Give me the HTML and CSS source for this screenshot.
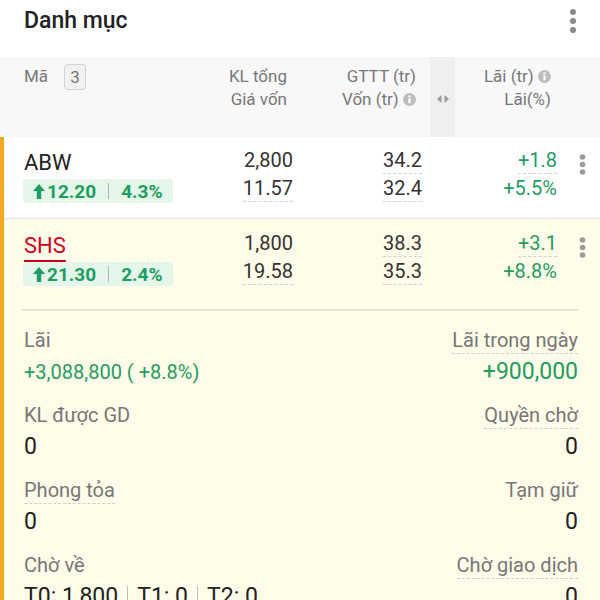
FILE: index.html
```html
<!DOCTYPE html>
<html lang="vi">
<head>
    <meta charset="UTF-8">
    <meta name="viewport" content="width=device-width, initial-scale=1.0">
    <title>Danh mục</title>
    <link rel="stylesheet" href="styles.css">
</head>
<body>
    <header class="top">
        <h1>Danh mục</h1>
        <svg class="kebab" width="8" height="24" viewBox="0 0 8 24"><circle cx="4" cy="3" r="3"/><circle cx="4" cy="12" r="3"/><circle cx="4" cy="21" r="3"/></svg>
    </header>

    <div class="thead grid">
        <div class="cell name-head"><span>Mã</span><span class="count">3</span></div>
        <div class="cell num"><div>KL tổng</div><div>Giá vốn</div></div>
        <div class="cell num"><div>GTTT (tr)</div><div>Vốn (tr) <svg class="info" width="13" height="13" viewBox="0 0 12 12"><circle cx="6" cy="6" r="6"/><rect x="5" y="5" width="2" height="4.5" fill="#fff"/><rect x="5" y="2.3" width="2" height="1.8" fill="#fff"/></svg></div></div>
        <div class="spacer"></div>
        <div class="swap"><svg width="12" height="8" viewBox="0 0 12 8"><path d="M0 4 L4.5 0 V8 Z M12 4 L7.5 0 V8 Z"/></svg></div>
        <div class="cell num"><div>Lãi (tr) <svg class="info" width="13" height="13" viewBox="0 0 12 12"><circle cx="6" cy="6" r="6"/><rect x="5" y="5" width="2" height="4.5" fill="#fff"/><rect x="5" y="2.3" width="2" height="1.8" fill="#fff"/></svg></div><div>Lãi(%)</div></div>
        <div></div>
    </div>

    <div class="list">
        <div class="row grid">
            <div class="stock">
                <div class="code">ABW</div>
                <div class="price">
                    <svg class="up" width="12" height="15" viewBox="0 0 12 15"><path d="M6 0 L12 7 H8.2 V15 H3.8 V7 H0 Z"/></svg>12.20<span class="bar"></span>4.3%
                </div>
            </div>
            <div class="num">
                <div class="line"><span>2,800</span></div>
                <div class="line"><span class="dash">11.57</span></div>
            </div>
            <div class="num">
                <div class="line"><span class="dash">34.2</span></div>
                <div class="line"><span class="dash">32.4</span></div>
            </div>
            <div></div>
            <div></div>
            <div class="num green">
                <div class="line"><span class="dash">+1.8</span></div>
                <div class="line"><span>+5.5%</span></div>
            </div>
            <div class="more"><svg width="7" height="21" viewBox="0 0 7 21"><circle cx="3.5" cy="3" r="2.8"/><circle cx="3.5" cy="10.5" r="2.8"/><circle cx="3.5" cy="18" r="2.8"/></svg></div>
        </div>

        <div class="row active">
            <div class="grid">
                <div class="stock">
                    <div class="code red"><span>SHS</span></div>
                    <div class="price">
                        <svg class="up" width="12" height="15" viewBox="0 0 12 15"><path d="M6 0 L12 7 H8.2 V15 H3.8 V7 H0 Z"/></svg>21.30<span class="bar"></span>2.4%
                    </div>
                </div>
                <div class="num">
                    <div class="line"><span>1,800</span></div>
                    <div class="line"><span class="dash">19.58</span></div>
                </div>
                <div class="num">
                    <div class="line"><span class="dash">38.3</span></div>
                    <div class="line"><span class="dash">35.3</span></div>
                </div>
                <div></div>
                <div></div>
                <div class="num green">
                    <div class="line"><span class="dash">+3.1</span></div>
                    <div class="line"><span>+8.8%</span></div>
                </div>
                <div class="more"><svg width="7" height="21" viewBox="0 0 7 21"><circle cx="3.5" cy="3" r="2.8"/><circle cx="3.5" cy="10.5" r="2.8"/><circle cx="3.5" cy="18" r="2.8"/></svg></div>
            </div>

            <div class="detail">
                <div class="item">
                    <div class="label">Lãi</div>
                    <div class="value green small">+3,088,800 ( +8.8%)</div>
                </div>
                <div class="item right">
                    <div class="label"><span class="dash">Lãi trong ngày</span></div>
                    <div class="value green">+900,000</div>
                </div>
                <div class="item">
                    <div class="label">KL được GD</div>
                    <div class="value">0</div>
                </div>
                <div class="item right">
                    <div class="label"><span class="dash">Quyền chờ</span></div>
                    <div class="value">0</div>
                </div>
                <div class="item">
                    <div class="label"><span class="dash">Phong tỏa</span></div>
                    <div class="value">0</div>
                </div>
                <div class="item right">
                    <div class="label">Tạm giữ</div>
                    <div class="value">0</div>
                </div>
                <div class="item">
                    <div class="label">Chờ về</div>
                    <div class="value">T0: 1,800<span class="sep"></span>T1: 0<span class="sep"></span>T2: 0</div>
                </div>
                <div class="item right">
                    <div class="label"><span class="dash">Chờ giao dịch</span></div>
                    <div class="value">0</div>
                </div>
            </div>
        </div>
    </div>
</body>
</html>
```

FILE: styles.css
```css
body {
    margin: 0;
    width: 600px;
    height: 600px;
    overflow: hidden;
    font-family: Roboto, "Liberation Sans", sans-serif;
    background: #fffce9;
    color: #222;
}
.top {
    height: 57px;
    background: #fff;
    display: flex;
    align-items: center;
    justify-content: space-between;
    padding: 0 23px 0 24px;
    box-sizing: border-box;
}
.top h1 {
    margin: 0 0 16px 0;
    font-size: 23px;
    font-weight: 500;
    color: #222;
}
.kebab {
    fill: #8a8a8a;
    margin-bottom: 15px;
}
.grid {
    display: grid;
    grid-template-columns: 161px 108px 129px 8px 25px 102px 43px;
}
.thead {
    height: 80px;
    padding-left: 24px;
    background: #f8f8f8;
    color: #777;
    font-size: 17px;
    line-height: 23px;
}
.thead .cell {
    padding-top: 8px;
}
.thead .num {
    padding-right: 6px;
}
.name-head {
    display: flex;
    align-items: flex-start;
}
.count {
    margin-left: 16px;
    margin-top: -1px;
    width: 20px;
    height: 24px;
    border: 1px solid #d4d4d4;
    border-radius: 4px;
    background: #f2f2f2;
    text-align: center;
    line-height: 24px;
}
.info {
    fill: #bdbdbd;
    vertical-align: -1px;
}
.swap {
    background: #efefef;
    display: flex;
    justify-content: center;
    padding-top: 38px;
    box-sizing: border-box;
}
.swap svg {
    fill: #9a9a9a;
}
.num {
    text-align: right;
}
.list {
    border-left: 4px solid #f5a623;
}
.row {
    background: #fff;
    padding: 10px 0 14px 20px;
}
.row.active {
    background: #fffce9;
    border-top: 3px solid #f0f0ee;
    padding: 0;
}
.row.active > .grid {
    padding: 10px 0 15px 20px;
}
.code {
    font-size: 22px;
    line-height: 32px;
    color: #222;
}
.code.red span {
    color: #d0021b;
    text-decoration: underline;
    text-decoration-thickness: 2px;
    text-underline-offset: 7px;
}
.price {
    display: inline-flex;
    align-items: center;
    height: 24px;
    padding: 0 11px 0 10px;
    margin-left: -1px;
    background: #e4f5ea;
    border-radius: 3px;
    color: #1f9d61;
    font-size: 19px;
    font-weight: 700;
}
.up {
    fill: #1f9d61;
    margin-right: 2px;
}
.bar {
    display: inline-block;
    width: 1px;
    height: 16px;
    background: #a9b5ae;
    margin: 0 12px;
}
.row .num {
    font-size: 20px;
    color: #333;
}
.line {
    height: 28px;
}
.line span {
    display: inline-block;
    line-height: 26px;
    border-bottom: 1px solid transparent;
}
.line span.dash, .label span.dash {
    border-bottom: 1px dashed #cfcfcf;
}
.row .num.green {
    color: #1f9d61;
}
.more {
    padding: 7px 0 0 22px;
}
.more svg {
    fill: #9a9a9a;
}
.detail {
    margin: 8px 22px 0 18px;
    padding: 14px 0 0 2px;
    border-top: 2px solid #e7e4d2;
    display: grid;
    grid-template-columns: 1fr 1fr;
    row-gap: 11px;
}
.item.right {
    text-align: right;
}
.label {
    color: #777;
    font-size: 20px;
    line-height: 30px;
}
.label span {
    display: inline-block;
    line-height: 26px;
}
.value {
    font-size: 23px;
    line-height: 34px;
    color: #222;
}
.value.small {
    font-size: 20px;
}
.green {
    color: #1f9d61;
}
.sep {
    display: inline-block;
    width: 1px;
    height: 18px;
    background: #bbb;
    margin: 0 9px;
}
```
